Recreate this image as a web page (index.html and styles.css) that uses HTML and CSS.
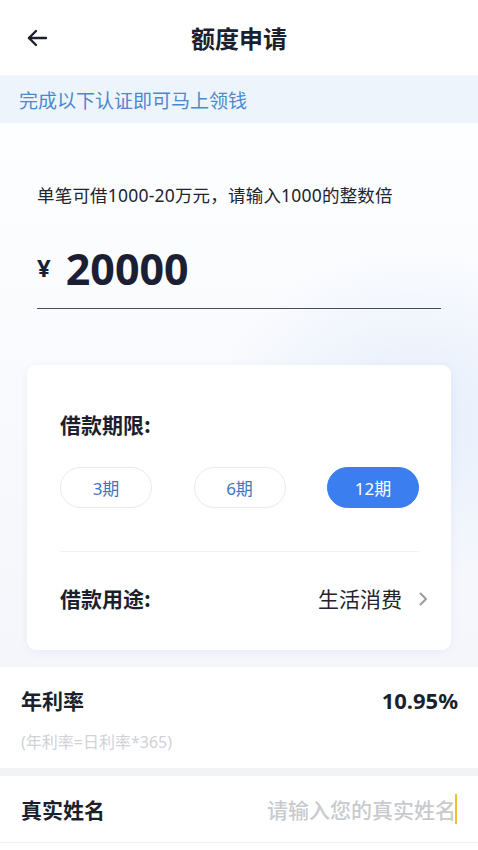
FILE: index.html
```html
<!DOCTYPE html>
<html lang="zh-CN">
<head>
<meta charset="utf-8">
<meta name="viewport" content="width=device-width, initial-scale=1">
<title>额度申请</title>
<link rel="stylesheet" href="styles.css">
</head>
<body>
<header class="topbar">
  <span class="back">
    <svg width="24" height="24" viewBox="0 0 24 24" fill="none" stroke="#1c1f2e" stroke-width="2.4" stroke-linecap="round" stroke-linejoin="round"><path d="M21 12H4"/><path d="M11 5l-7 7 7 7"/></svg>
  </span>
  <h1 class="title">额度申请</h1>
  <span class="spacer"></span>
</header>
<div class="notice">完成以下认证即可马上领钱</div>
<main class="main">
  <div class="amount-wrap">
    <p class="desc">单笔可借1000-20万元，请输入1000的整数倍</p>
    <div class="amount">
      <span class="yen">¥</span>
      <span class="value">20000</span>
    </div>
  </div>
  <section class="card">
    <div class="card-label">借款期限:</div>
    <div class="terms">
      <span class="term">3期</span>
      <span class="term">6期</span>
      <span class="term active">12期</span>
    </div>
    <div class="divider"></div>
    <div class="purpose">
      <span class="card-label">借款用途:</span>
      <span class="purpose-val">生活消费
        <svg class="chev" width="10" height="16" viewBox="0 0 10 16" fill="none" stroke="#9a9ca3" stroke-width="2" stroke-linecap="round" stroke-linejoin="round"><path d="M2.5 2.5l5.5 5.5-5.5 5.5"/></svg>
      </span>
    </div>
  </section>
</main>
<section class="rate">
  <div class="rate-row">
    <span class="label">年利率</span>
    <span class="rate-val">10.95%</span>
  </div>
  <div class="formula">(年利率=日利率*365)</div>
</section>
<div class="gap"></div>
<section class="name-row">
  <span class="label">真实姓名</span>
  <span class="placeholder">请输入您的真实姓名<span class="caret"></span></span>
</section>
</body>
</html>
```
FILE: styles.css
```css
* { box-sizing: border-box; }
html, body { margin: 0; padding: 0; }
body {
  width: 478px;
  min-height: 850px;
  background: #ffffff;
  font-family: "Noto Sans", "Noto Sans CJK SC", sans-serif;
  color: #1c1f2e;
}
.topbar {
  height: 75px;
  display: grid;
  grid-template-columns: 70px 1fr 70px;
  align-items: center;
}
.back {
  display: flex;
  padding-left: 25px;
  padding-top: 1px;
}
.title {
  margin: 0;
  text-align: center;
  font-family: "Noto Sans CJK SC", sans-serif;
  font-size: 24px;
  font-weight: 700;
  line-height: 30px;
  color: #1c1f2e;
}
.notice {
  height: 48px;
  display: flex;
  align-items: center;
  padding-left: 19px;
  background: #eef4fb;
  color: #4a89cf;
  font-family: "Noto Sans CJK SC", sans-serif;
  font-size: 19px;
}
.main {
  padding: 60px 0 17px;
  background:
    radial-gradient(ellipse 200px 170px at 415px 295px, rgba(229,238,252,1), rgba(232,240,252,0)),
    linear-gradient(#fdfeff, #f4f6fb);
}
.amount-wrap { padding: 0 37px; }
.desc {
  margin: 0;
  font-size: 17.5px;
  line-height: 24px;
  letter-spacing: 0.2px;
  color: #222430;
}
.amount {
  margin-top: 41px;
  display: flex;
  align-items: center;
  gap: 15px;
  padding-bottom: 18px;
  border-bottom: 1.5px solid #4a4c55;
}
.yen {
  font-size: 24px;
  font-weight: 700;
  line-height: 42px;
  color: #1c1f33;
  margin-top: -3px;
}
.value {
  font-size: 43px;
  font-weight: 700;
  line-height: 42px;
  color: #1c1f33;
}
.card {
  margin: 56px 27px 0;
  background: #ffffff;
  border-radius: 9px;
  box-shadow: 0 2px 10px rgba(40,70,130,0.06);
  padding: 45px 32px 0 33px;
}
.card-label {
  font-family: "Noto Sans CJK SC", sans-serif;
  font-size: 21px;
  font-weight: 700;
  line-height: 28px;
  color: #1c1f2e;
}
.terms {
  margin-top: 29px;
  display: flex;
  justify-content: space-between;
}
.term {
  width: 92px;
  height: 41px;
  border: 1px solid #e5ebf1;
  border-radius: 21px;
  display: flex;
  align-items: center;
  justify-content: center;
  font-size: 17px;
  color: #3b78c7;
}
.term.active {
  background: #3b7ef0;
  border-color: #3b7ef0;
  color: #ffffff;
}
.divider {
  margin-top: 43px;
  height: 1px;
  background: #eef0f3;
}
.purpose {
  height: 98px;
  padding-bottom: 6px;
  margin-right: -9px;
  display: flex;
  align-items: center;
  justify-content: space-between;
}
.purpose-val {
  display: flex;
  align-items: center;
  gap: 16px;
  font-family: "Noto Sans CJK SC", sans-serif;
  font-size: 21px;
  color: #222430;
}
.chev { margin-top: 1px; }
.rate {
  padding: 19px 20px 16px 21px;
  background: #ffffff;
}
.rate-row {
  display: flex;
  justify-content: space-between;
  align-items: center;
}
.label {
  font-family: "Noto Sans CJK SC", sans-serif;
  font-size: 21px;
  font-weight: 700;
  line-height: 28px;
  color: #1c1f2e;
}
.rate-val {
  font-size: 22px;
  font-weight: 700;
  line-height: 28px;
  color: #1c1f2e;
}
.formula {
  margin-top: 18px;
  font-size: 16px;
  line-height: 20px;
  color: #d0d2d6;
}
.gap {
  height: 8px;
  background: #f2f3f5;
}
.name-row {
  height: 67px;
  padding: 0 21px 0 21px;
  border-bottom: 1px solid #f0f1f3;
  display: flex;
  align-items: center;
  justify-content: space-between;
}
.placeholder {
  display: flex;
  align-items: center;
  font-family: "Noto Sans CJK SC", sans-serif;
  font-size: 21px;
  font-weight: 500;
  color: #c9cacd;
}
.caret {
  width: 2px;
  height: 30px;
  background: #f0c030;
  margin-left: -1px;
}
```
